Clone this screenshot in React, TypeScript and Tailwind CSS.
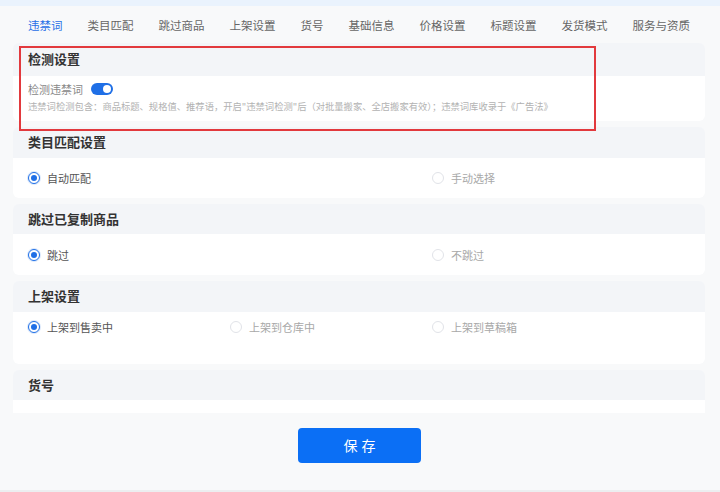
import React from "react";

const tabs = ["违禁词", "类目匹配", "跳过商品", "上架设置", "货号", "基础信息", "价格设置", "标题设置", "发货模式", "服务与资质"];

function Radio({ label, checked }: { label: string; checked?: boolean }) {
  return (
    <div className="flex items-center gap-[7px] h-[12px]">
      {checked ? (
        <span className="w-[12px] h-[12px] rounded-full border border-[#1f6fe6] flex items-center justify-center bg-white shadow-[0_0_0_1px_#dbe8fb]">
          <span className="w-[6px] h-[6px] rounded-full bg-[#1f6fe6]" />
        </span>
      ) : (
        <span className="w-[12px] h-[12px] rounded-full border border-[#e1e3e8] bg-white" />
      )}
      <span className={`text-[11px] leading-[12px] ${checked ? "text-[#555]" : "text-[#a8a8a8]"}`}>{label}</span>
    </div>
  );
}

function Header({ title, h }: { title: string; h: string }) {
  return (
    <div className={`${h} bg-[#f3f5f8] px-[15px] flex items-center pb-[1px]`}>
      <span className="text-[13px] font-bold text-[#333]">{title}</span>
    </div>
  );
}

const row = "bg-white pl-[15px] grid grid-cols-[202px_202px_202px]";

export default function App() {
  return (
    <div
      className="w-[720px] h-[492px] bg-[#f8f9fa] relative overflow-hidden flex flex-col"
      style={{ fontFamily: '"Noto Sans CJK SC", "Noto Sans", sans-serif' }}
    >
      <div className="h-[6px] bg-[#eaf3fd] shrink-0" />

      {/* tabs */}
      <div className="h-[37px] shrink-0 pt-[3px] pl-[28px] flex items-center gap-[25px]">
        {tabs.map((t, i) => (
          <span key={t} className={`text-[11.5px] ${i === 0 ? "text-[#1f6fe6]" : "text-[#666]"}`}>
            {t}
          </span>
        ))}
      </div>

      {/* sections */}
      <div className="ml-[13px] w-[692px] h-[370px] shrink-0 overflow-hidden flex flex-col gap-[6px]">
        <div className="rounded-[6px] overflow-hidden shrink-0">
          <Header title="检测设置" h="h-[33px]" />
          <div className="h-[45px] bg-white px-[15px] pt-[7px] flex flex-col">
            <div className="flex items-center gap-[8px] h-[12px]">
              <span className="text-[11px] leading-[12px] text-[#888]">检测违禁词</span>
              <span className="w-[22px] h-[12px] rounded-full bg-[#1f6fe6] flex items-center justify-end pr-[2px]">
                <span className="w-[8px] h-[8px] rounded-full bg-white" />
              </span>
            </div>
            <div className="mt-[5px] text-[9.3px] leading-[12px] text-[#b2b2b2] whitespace-nowrap">
              违禁词检测包含：商品标题、规格值、推荐语，开启"违禁词检测"后（对批量搬家、全店搬家有效）；违禁词库收录于《广告法》
            </div>
          </div>
        </div>

        <div className="rounded-[6px] overflow-hidden shrink-0">
          <Header title="类目匹配设置" h="h-[31px]" />
          <div className={`h-[40px] items-center ${row}`}>
            <Radio label="自动匹配" checked />
            <div />
            <Radio label="手动选择" />
          </div>
        </div>

        <div className="rounded-[6px] overflow-hidden shrink-0">
          <Header title="跳过已复制商品" h="h-[30px]" />
          <div className={`h-[41px] items-center ${row}`}>
            <Radio label="跳过" checked />
            <div />
            <Radio label="不跳过" />
          </div>
        </div>

        <div className="rounded-[6px] overflow-hidden shrink-0">
          <Header title="上架设置" h="h-[31px]" />
          <div className={`h-[52px] pt-[9px] items-start ${row}`}>
            <Radio label="上架到售卖中" checked />
            <Radio label="上架到仓库中" />
            <Radio label="上架到草稿箱" />
          </div>
        </div>

        <div className="rounded-[6px] overflow-hidden shrink-0">
          <Header title="货号" h="h-[30px]" />
          <div className="h-[40px] bg-white" />
        </div>
      </div>

      {/* save */}
      <div className="mt-[15px] flex pl-[298px] shrink-0">
        <button className="w-[123px] h-[35px] rounded-[4px] bg-[#0b6ff5] text-white text-[14px] tracking-[4px] pl-[4px]">
          保存
        </button>
      </div>

      <div className="mt-auto h-[2px] bg-[#eceef0] shrink-0" />

      {/* annotation box */}
      <div className="absolute left-[19px] top-[46px] w-[577px] h-[85px] border-2 border-[#e2393d]" />
    </div>
  );
}
